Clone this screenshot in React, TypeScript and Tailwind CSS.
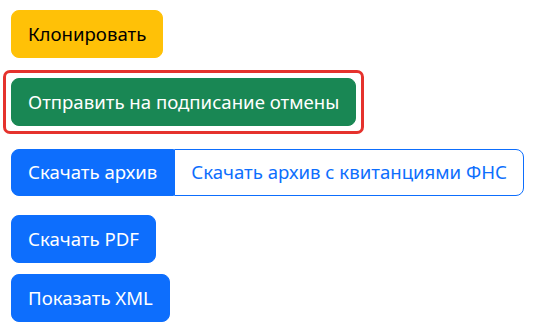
export default function App() {
  const font = { fontFamily: '"Noto Sans", "Open Sans", sans-serif' };
  return (
    <div className="w-[535px] h-[328px] bg-white pl-[11px] pt-[10px] flex flex-col items-start" style={font}>
      <button className="h-[48px] px-[16px] rounded-[8px] bg-[#ffc107] border border-[#ffc107] text-black text-[18.6px] leading-none">
        Клонировать
      </button>

      {/* highlighted action */}
      <div className="mt-[12px] -ml-[8px] p-[5px] border-[3px] border-[#e5322d] rounded-[7px]">
        <button className="h-[48px] px-[16px] rounded-[8px] bg-[#198754] border border-[#198754] text-white text-[18.6px] leading-none">
          Отправить на подписание отмены
        </button>
      </div>

      <div className="mt-[15px] flex h-[47px]">
        <button className="px-[16px] rounded-l-[8px] bg-[#0d6efd] border border-[#0d6efd] text-white text-[18.6px] leading-none">
          Скачать архив
        </button>
        <button className="px-[16px] rounded-r-[8px] bg-white border border-[#0d6efd] text-[#0d6efd] text-[18.6px] leading-none">
          Скачать архив с квитанциями ФНС
        </button>
      </div>

      <button className="mt-[19px] h-[48px] px-[16px] rounded-[8px] bg-[#0d6efd] border border-[#0d6efd] text-white text-[18.6px] leading-none">
        Скачать PDF
      </button>

      <button className="mt-[11px] h-[48px] px-[16px] rounded-[8px] bg-[#0d6efd] border border-[#0d6efd] text-white text-[18.6px] leading-none">
        Показать XML
      </button>
    </div>
  );
}
